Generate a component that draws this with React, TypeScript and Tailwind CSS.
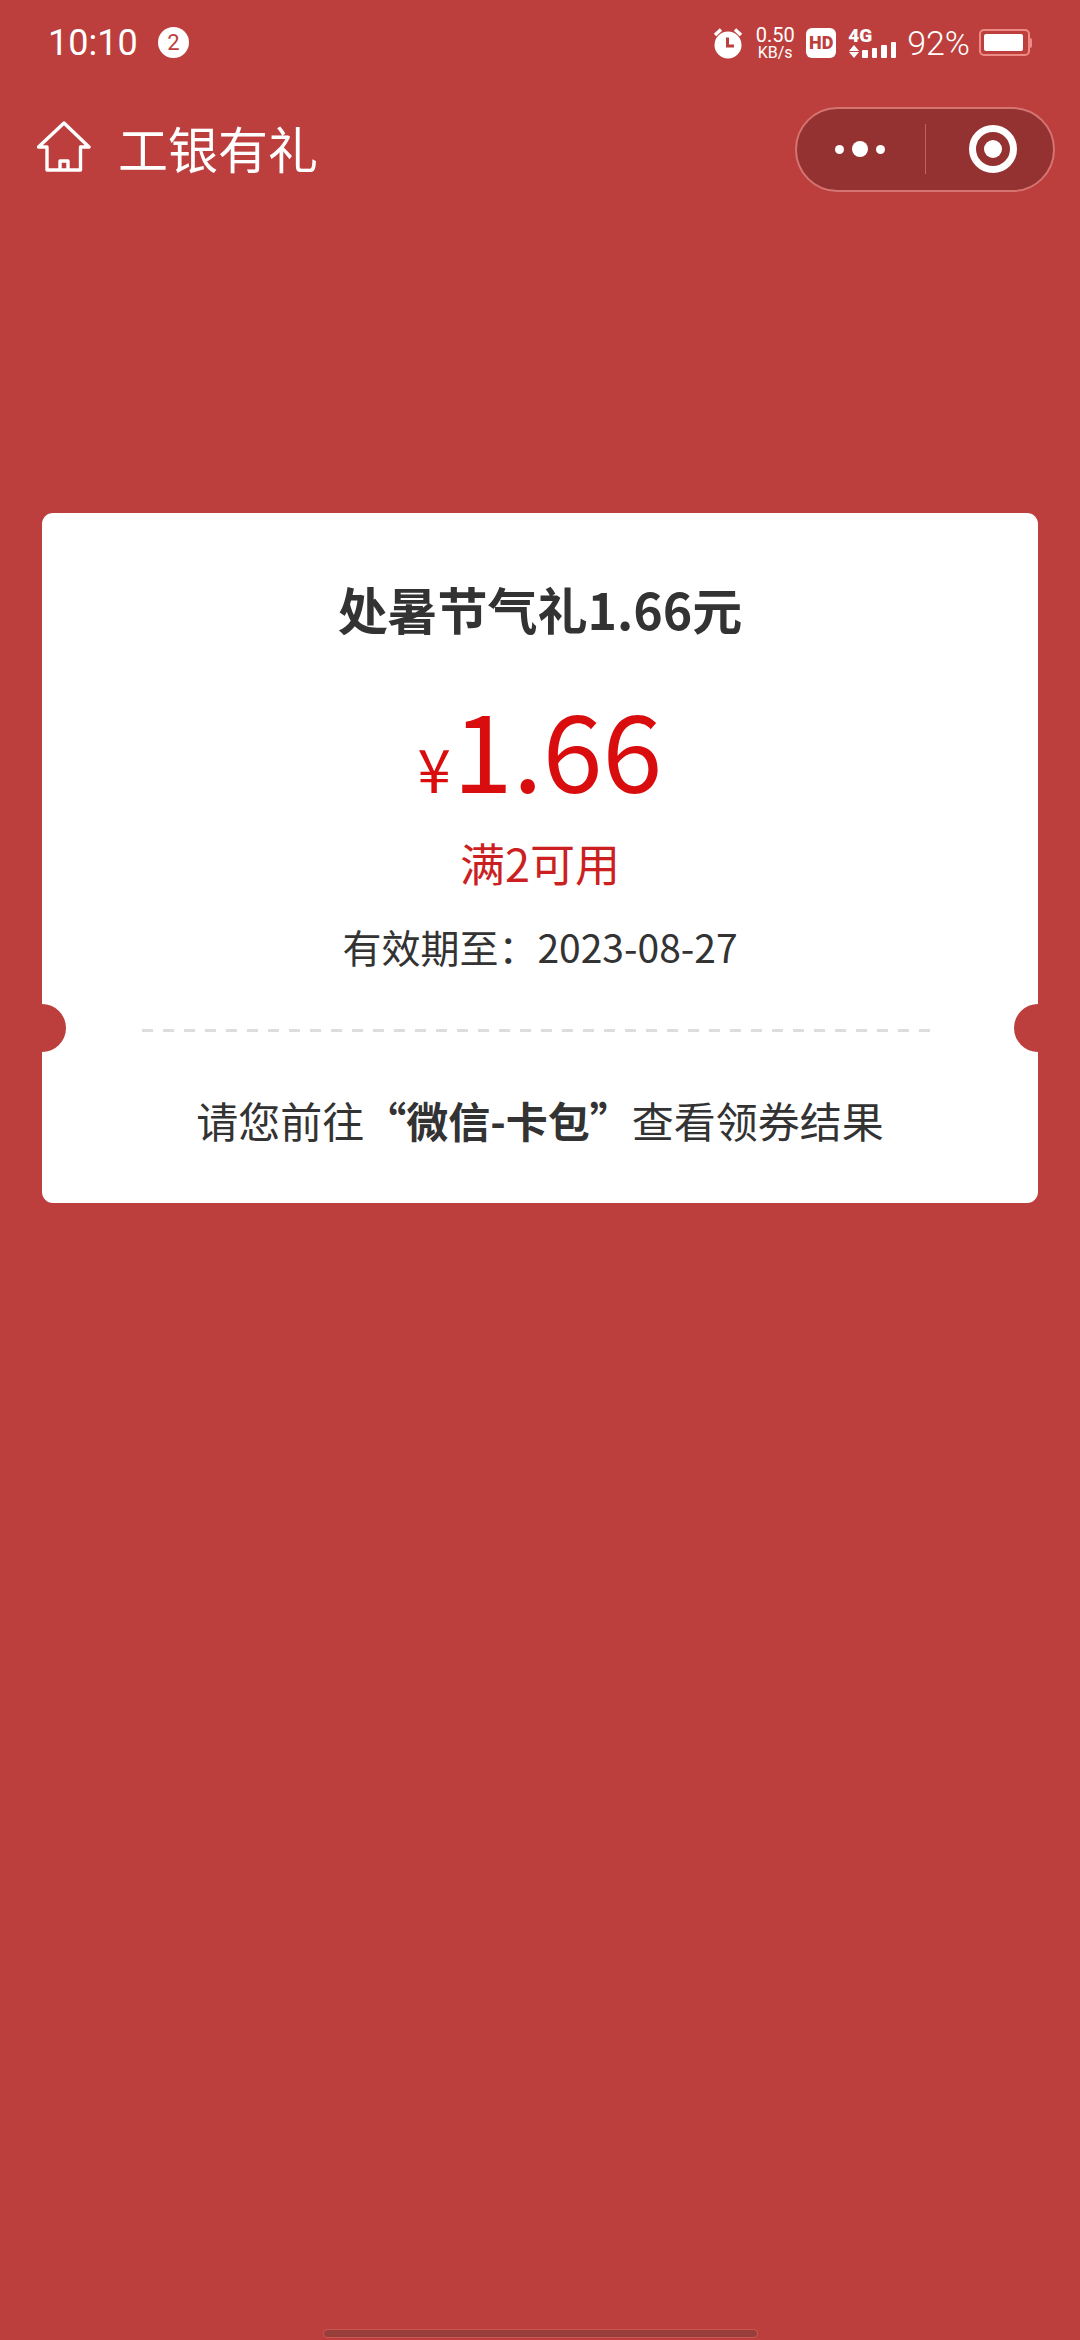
const CJK = "font-['Noto_Sans_CJK_SC','Noto_Sans',sans-serif]";

function AlarmIcon() {
  return (
    <svg width="32" height="32" viewBox="0 0 32 32">
      <circle cx="16" cy="18" r="13.5" fill="#fff" />
      <path d="M3 8 L9 2.5 M29 8 L23 2.5" stroke="#fff" strokeWidth="3.5" />
      <path d="M15.5 10.5 V19 H22" fill="none" stroke="#bc3f3e" strokeWidth="3" />
    </svg>
  );
}

function SignalBars() {
  const bars = ["h-[8px]", "h-[10px]", "h-[13px]", "h-[16px]"];
  return (
    <div className="flex items-end gap-[4px] ml-[2px]">
      {bars.map((h, i) => (
        <div key={i} className={`w-[5.5px] ${h} bg-white rounded-[1px]`} />
      ))}
    </div>
  );
}

function Battery() {
  return (
    <div className="flex items-center">
      <div className="w-[51px] h-[27px] border-2 border-[#ee8a85] rounded-[5px] p-[3px]">
        <div className="w-[39px] h-full bg-white rounded-[2px]" />
      </div>
      <div className="w-[2px] h-[10px] bg-[#ee8a85] rounded-r-sm" />
    </div>
  );
}

function StatusBar() {
  return (
    <div className="flex items-center justify-between h-[84px] pl-[48px] pr-[48px] pt-[1px] text-white font-['Roboto',sans-serif]">
      <div className="flex items-center">
        <span className="text-[36px] leading-none w-[110px]">10:10</span>
        <div className="w-[31px] h-[31px] rounded-full bg-white flex items-center justify-center text-[#bc3f3e] text-[22px] leading-none">
          2
        </div>
      </div>
      <div className="flex items-center">
        <AlarmIcon />
        <div className="ml-[11px] w-[40px] flex flex-col items-center">
          <span className="text-[20px] leading-[20px]">0.50</span>
          <span className="text-[16px] leading-[16px]">KB/s</span>
        </div>
        <div className="ml-[11px] w-[30px] h-[30px] bg-white rounded-[6px] flex items-center justify-center text-[#bc3f3e] text-[18px] font-black leading-none">
          HD
        </div>
        <div className="ml-[12px] flex items-end">
          <div className="flex flex-col items-start w-[12px]">
            <span className="text-[19px] leading-[15px] font-black">4G</span>
            <span className="w-0 h-0 mt-[2px] ml-[1px] border-x-[5px] border-x-transparent border-b-[6px] border-b-white" />
            <span className="w-0 h-0 mt-[1px] ml-[1px] border-x-[5px] border-x-transparent border-t-[6px] border-t-white" />
          </div>
          <SignalBars />
        </div>
        <span className="ml-[11px] text-[34px] leading-none font-light">92%</span>
        <div className="ml-[9px]">
          <Battery />
        </div>
      </div>
    </div>
  );
}

function NavBar() {
  return (
    <div className="flex items-center justify-between h-[86px] mt-[22px] pl-[37px] pr-[25px]">
      <div className="flex items-center pb-[4px]">
        <svg width="54" height="52" viewBox="0 0 54 52" fill="none" stroke="#fff" strokeWidth="3.4" strokeLinejoin="round">
          <path d="M1.5 26 L27 2 L52 26 H43.5 V49 H10 V26 Z" />
          <path d="M23 49 V40 H31 V49" />
        </svg>
        <h1 className={`ml-[27px] text-[50px] leading-none text-white ${CJK}`}>工银有礼</h1>
      </div>
      <div className="w-[260px] h-[85px] rounded-full bg-[#933231] border-2 border-[#d47471] flex items-center">
        <div className="w-[128px] flex items-center justify-center gap-[8px] pr-[2px]">
          <span className="w-[9px] h-[9px] rounded-full bg-white" />
          <span className="w-[16px] h-[16px] rounded-full bg-white" />
          <span className="w-[9px] h-[9px] rounded-full bg-white" />
        </div>
        <div className="w-px h-[50px] bg-[#c5605d]" />
        <div className="flex-1 flex items-center justify-center pl-[7px]">
          <div className="w-[48px] h-[48px] rounded-full border-[7px] border-white flex items-center justify-center">
            <span className="w-[18px] h-[18px] rounded-full bg-white" />
          </div>
        </div>
      </div>
    </div>
  );
}

function CouponCard() {
  return (
    <div className={`relative mt-[321px] mx-[42px] h-[690px] bg-white rounded-[11px] flex flex-col items-center text-[#333] ${CJK}`}>
      <h2 className="mt-[65px] text-[50px] leading-[60px] font-bold">处暑节气礼1.66元</h2>
      <div className="mt-[49px] flex items-baseline text-[#d90d0d] h-[118px]">
        <span className="text-[60px] leading-[118px] mr-[2px]">¥</span>
        <span className="text-[108px] leading-[118px]">1.66</span>
      </div>
      <p className="mt-[28px] text-[45px] leading-[60px] text-[#cc1f1f]">满2可用</p>
      <p className="mt-[23px] text-[39px] leading-[60px]">有效期至：2023-08-27</p>

      {/* 虚线 */}
      <div className="mt-[53px] mr-[8px] flex gap-[10px]">
        {Array.from({ length: 38 }).map((_, i) => (
          <span key={i} className="w-[11px] h-[3px] bg-[#dddddd]" />
        ))}
      </div>

      <p className="mt-[58px] text-[42px] leading-[60px]">
        请您前往<span className="font-bold">“微信-卡包”</span>查看领券结果
      </p>

      {/* 票券缺口 */}
      <div className="absolute left-[-24px] top-[491px] w-[48px] h-[48px] rounded-full bg-[#bc3f3e]" />
      <div className="absolute right-[-24px] top-[491px] w-[48px] h-[48px] rounded-full bg-[#bc3f3e]" />
    </div>
  );
}

export default function App() {
  return (
    <div className="h-[2340px] w-[1080px] bg-[#bc3f3e] flex flex-col overflow-hidden">
      <StatusBar />
      <NavBar />
      <CouponCard />
      <div className="mt-auto mb-[3px] mx-auto w-[433px] h-[7px] rounded-full bg-[#983e3b] ring-1 ring-[#cc5552]" />
    </div>
  );
}
